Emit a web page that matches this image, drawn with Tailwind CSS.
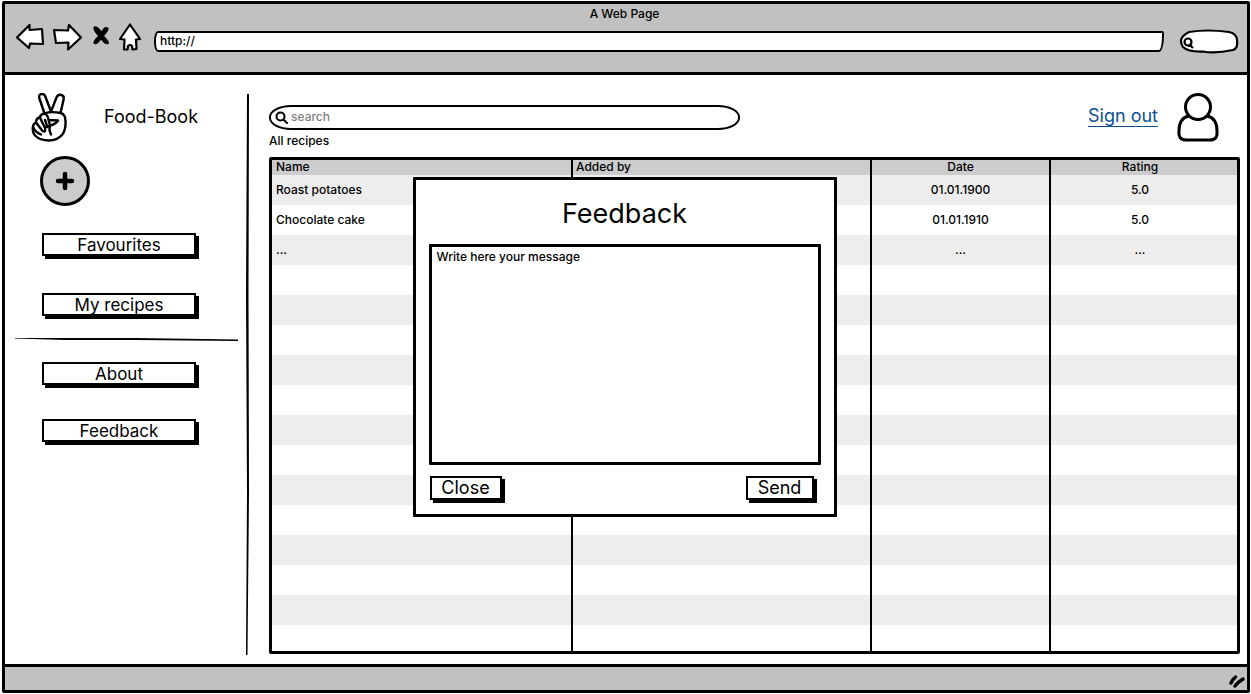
<!DOCTYPE html>
<html lang="en">
<head>
<meta charset="utf-8">
<meta name="viewport" content="width=device-width, initial-scale=1">
<title>Food-Book</title>
<script src="https://cdn.jsdelivr.net/npm/@tailwindcss/browser@4"></script>
</head>
<body class="bg-white font-['Inter',sans-serif] text-black text-[12px] leading-4 font-medium">
<div class="relative flex min-h-screen flex-col p-px">
<div class="ml-px flex grow flex-col rounded-[2px] border-[3px] border-black">

  <!-- Browser bar -->
  <header class="flex flex-col border-b-[3px] border-black bg-[#c1c1c1] pt-[2px] pb-[18px]">
    <div class="pr-[3px] text-center">A Web Page</div>
    <div class="flex items-center pr-2 pl-[10px]">
      <nav class="flex gap-2" aria-label="Browser">
        <button type="button" aria-label="Back" class="h-8 w-[30px]"><svg class="h-8 w-[30px]" viewBox="0 0 30 32" fill="#fff" stroke="#000" stroke-width="2.200" stroke-linejoin="round"><path d="M2 15.500 L14.500 3 L14.500 8 L27 7 L28 22 L15 21.500 L14 26 Z"/></svg></button>
        <button type="button" aria-label="Forward" class="h-8 w-[30px]"><svg class="h-8 w-[30px]" viewBox="0 0 30 32" fill="#fff" stroke="#000" stroke-width="2.200" stroke-linejoin="round"><path d="M28 15.500 L16 3 L15 8.500 L1 8 L3 21 L15.500 20.500 L15 27.500 Z"/></svg></button>
        <button type="button" aria-label="Stop" class="h-8 w-5"><svg class="h-8 w-5" viewBox="0 0 20 32" fill="#000" stroke="#000" stroke-width="1" stroke-linejoin="round"><path d="M3 5 Q7 4 10.500 10 Q13 4 17 6 Q18 8 12.500 14 Q18 19 17.500 21.500 Q14 23 10 17 Q6 23 3 21.500 Q2 19 7.500 14 Q2 8 3 5 Z"/></svg></button>
        <button type="button" aria-label="Home" class="-ml-px h-8 w-6"><svg class="h-8 w-6" viewBox="0 0 24 32" fill="#fff" stroke="#000" stroke-width="2.200" stroke-linejoin="round"><path d="M12 2.500 L22 17 L18 17.500 L18.500 27 L14.500 27.500 L14 24 Q12 22 10 24 L9.500 27.500 L6 27.500 L6.500 17.500 L2 17 Z"/></svg></button>
      </nav>
      <div class="mt-[6px] ml-3 flex grow"><input type="text" aria-label="Address" value="http://" class="h-[21px] w-full rounded-[4px_2px_5px_4px/10px_2px_16px_10px] border-2 border-black bg-white px-1 pb-px outline-none"></div>
      <div class="relative mt-[6px] ml-[15px] h-[25px] w-[60px]">
        <svg class="absolute inset-0 h-full w-full" viewBox="0 0 60 25" fill="#fff" stroke="#000" stroke-width="2.200"><path d="M10 3 Q29 0 50 3 Q59 5 58 13 Q59 19 54 21 Q36 25 24 22.500 Q9 23 4 18 Q-2 9 10 3 Z"/><circle cx="9" cy="13" r="3.500"/><path d="M11 16 L14 19 M9 17 L13 17"/></svg>
        <input type="text" aria-label="Browser search" class="absolute inset-y-1 right-2 left-4 w-9 bg-transparent outline-none">
      </div>
    </div>
  </header>

  <div class="flex grow">
    <!-- Sidebar -->
    <aside class="flex w-[241px] shrink-0 flex-col pt-[18px]">
      <div class="flex items-start pl-[25px]">
        <svg class="h-[50px] w-[38px]" viewBox="0 0 38 50" fill="#fff" stroke="#000" stroke-width="2.400" stroke-linecap="round" stroke-linejoin="round"><path d="M14.500 20.500 L9.300 5 Q8.500 1.500 11.500 1 Q14.500 0.500 15.500 4 L21 18.500 L26.500 4.500 Q28 1 31.500 2 Q34.500 3 33.500 7 L30.500 20 Q35.500 21 35.500 28 Q36 37 32 42 Q27 47.500 19 47.500 Q10 47.500 5 42.500 Q2 39 3 34 Q3 31 6 29.500 Q6 25 10 24.500 Q10 21.500 14.500 20.500 Q21 18 30.500 20"/><path d="M14.500 20.500 Q18 22 18.500 27 L28 27.500 Q25.500 31.500 20 32.500 Q18.500 37 21 41.500 M18.500 27 L20 32.500 L15 35 Q12 29 10 24.500 M6 29.500 L12.500 38 Q16 40 15 35 M3 34 Q5 39 11 41.500 M15 27 L17 33" fill="none"/></svg>
        <h1 class="mt-3 ml-9 text-[18px] leading-6 font-normal">Food-Book</h1>
      </div>
      <button type="button" aria-label="Add recipe" class="mt-[13px] ml-[35px] grid size-[50px] place-items-center rounded-full border-[3px] border-black bg-[#ccc]"><svg class="size-5" viewBox="0 0 20 20" stroke="#000" stroke-width="4.500" stroke-linecap="round"><path d="M10 3 V17 M3 10 H17"/></svg></button>
      <div class="mt-[27px] flex flex-col gap-[37px] pl-[37px]">
        <button type="button" class="h-[23px] w-[154px] border-2 border-black bg-white text-[17px] leading-5 font-normal shadow-[3px_3px_0_#000]">Favourites</button>
        <button type="button" class="h-[23px] w-[154px] border-2 border-black bg-white text-[17px] leading-5 font-normal shadow-[3px_3px_0_#000]">My recipes</button>
      </div>
      <svg class="mt-[21px] ml-[10px] h-[5px] w-[223px]" viewBox="0 0 223 5" preserveAspectRatio="none"><path d="M0 1 L120 1 L223 2.500 V4 L120 3 L50 3 L0 1.500 Z"/></svg>
      <div class="mt-5 flex flex-col gap-[34px] pl-[37px]">
        <button type="button" class="h-[23px] w-[154px] border-2 border-black bg-white text-[17px] leading-5 font-normal shadow-[3px_3px_0_#000]">About</button>
        <button type="button" class="h-[23px] w-[154px] border-2 border-black bg-white text-[17px] leading-5 font-normal shadow-[3px_3px_0_#000]">Feedback</button>
      </div>
    </aside>
    <svg class="mt-[19px] h-[561px] w-[3px] shrink-0" viewBox="0 0 3 562" preserveAspectRatio="none"><path d="M1 0 H3 L2.500 200 L3 400 L1.500 562 H0 L1 400 L0 200 Z"/></svg>

    <!-- Recipes -->
    <main class="flex grow flex-col pt-[17px] pr-[7px] pb-[10px] pl-5">
      <div class="flex h-12 items-start justify-between">
        <div class="mt-[13px] flex h-[25px] w-[471px] items-center rounded-[22px/12px] border-2 border-black pl-1">
          <svg class="size-[13px] shrink-0" viewBox="0 0 13 13" fill="none" stroke="#000" stroke-width="2" stroke-linecap="round"><circle cx="5.500" cy="5.500" r="4"/><path d="M8.500 8.500 L12 12"/></svg>
          <input type="text" aria-label="Search recipes" placeholder="search" class="ml-[3px] h-full w-full bg-transparent pb-[2px] outline-none placeholder:text-[#808080]">
        </div>
        <div class="flex">
          <a href="#" class="mt-[14px] mr-[18px] h-[21px] border-b border-[#0b4f93] text-[18px] leading-5 font-normal text-[#0b4f93]">Sign out</a>
          <svg class="mr-5 h-[50px] w-[44px]" viewBox="0 0 44 50" fill="#fff" stroke="#000" stroke-width="3"><path d="M13 24 Q3 26 3 39 Q2 48 10 48 H34 Q42 48 41 39 Q41 26 31 24"/><circle cx="22" cy="15" r="12.500"/></svg>
        </div>
      </div>
      <h2 class="-mt-[7px]">All recipes</h2>
      <div class="mt-2 h-0 grow overflow-hidden rounded-[2px] border-[3px] border-black">
        <table class="-mt-px w-full table-fixed border-collapse">
          <colgroup><col class="w-[300px]"><col class="w-[299px]"><col class="w-[179px]"><col></colgroup>
          <thead class="bg-[#ccc]"><tr class="h-4 text-left leading-4"><th class="border-r-2 border-black px-1 py-0 font-medium">Name</th><th class="border-r-2 border-black px-[3px] py-0 font-medium">Added by</th><th class="border-r-2 border-black p-0 text-center font-medium">Date</th><th class="p-0 pr-2 text-center font-medium">Rating</th></tr></thead>
          <tbody id="rows"></tbody>
        </table>
      </div>
    </main>
  </div>

  <footer class="relative h-[26px] border-t-[3px] border-black bg-[#c1c1c1]">
    <svg class="absolute right-px bottom-px h-4 w-[18px]" viewBox="0 0 18 16" stroke="#000" stroke-width="3.500" stroke-linecap="round"><path d="M3 10 Q4 7 7.500 4 M7 13 Q10 9 15 6"/></svg>
  </footer>
</div>

<!-- Feedback dialog -->
<form role="dialog" aria-labelledby="dialog-title" class="absolute top-[177px] left-1/2 w-[424px] -translate-x-[213px] rounded-[1px] border-[3px] border-black bg-white px-[13px] pt-4 pb-[14px]">
  <h2 id="dialog-title" class="text-center text-[27px] leading-9 font-normal">Feedback</h2>
  <textarea aria-label="Message" class="mt-3 block h-[221px] w-full resize-none rounded-[1px] border-[3px] border-black px-[5px] py-[2px] leading-4 outline-none">Write here your message</textarea>
  <div class="mt-[11px] flex justify-between pr-[7px] pl-px">
    <button type="button" class="h-6 w-[72px] border-2 border-black bg-white text-[18px] leading-5 font-normal shadow-[3px_3px_0_#000]">Close</button>
    <button type="submit" class="h-6 w-[68px] border-2 border-black bg-white text-[18px] leading-5 font-normal shadow-[3px_3px_0_#000]">Send</button>
  </div>
</form>
</div>

<script>
const recipes = [
  ["Roast potatoes", "", "01.01.1900", "5.0"],
  ["Chocolate cake", "", "01.01.1910", "5.0"],
  ["...", "", "...", "..."]
];
const cellStyles = [
  "border-r-2 border-black px-1 py-0",
  "border-r-2 border-black px-[3px] py-0",
  "border-r-2 border-black p-0 text-center",
  "p-0 pr-2 text-center"
];
const body = document.getElementById("rows");
for (let i = 0; i < 16; i++) {
  const tr = body.insertRow();
  tr.className = "h-[30px] odd:bg-[#ededed]";
  cellStyles.forEach((style, c) => {
    const td = tr.insertCell();
    td.className = style;
    td.textContent = recipes[i] ? recipes[i][c] : "";
  });
}
</script>
</body>
</html>
